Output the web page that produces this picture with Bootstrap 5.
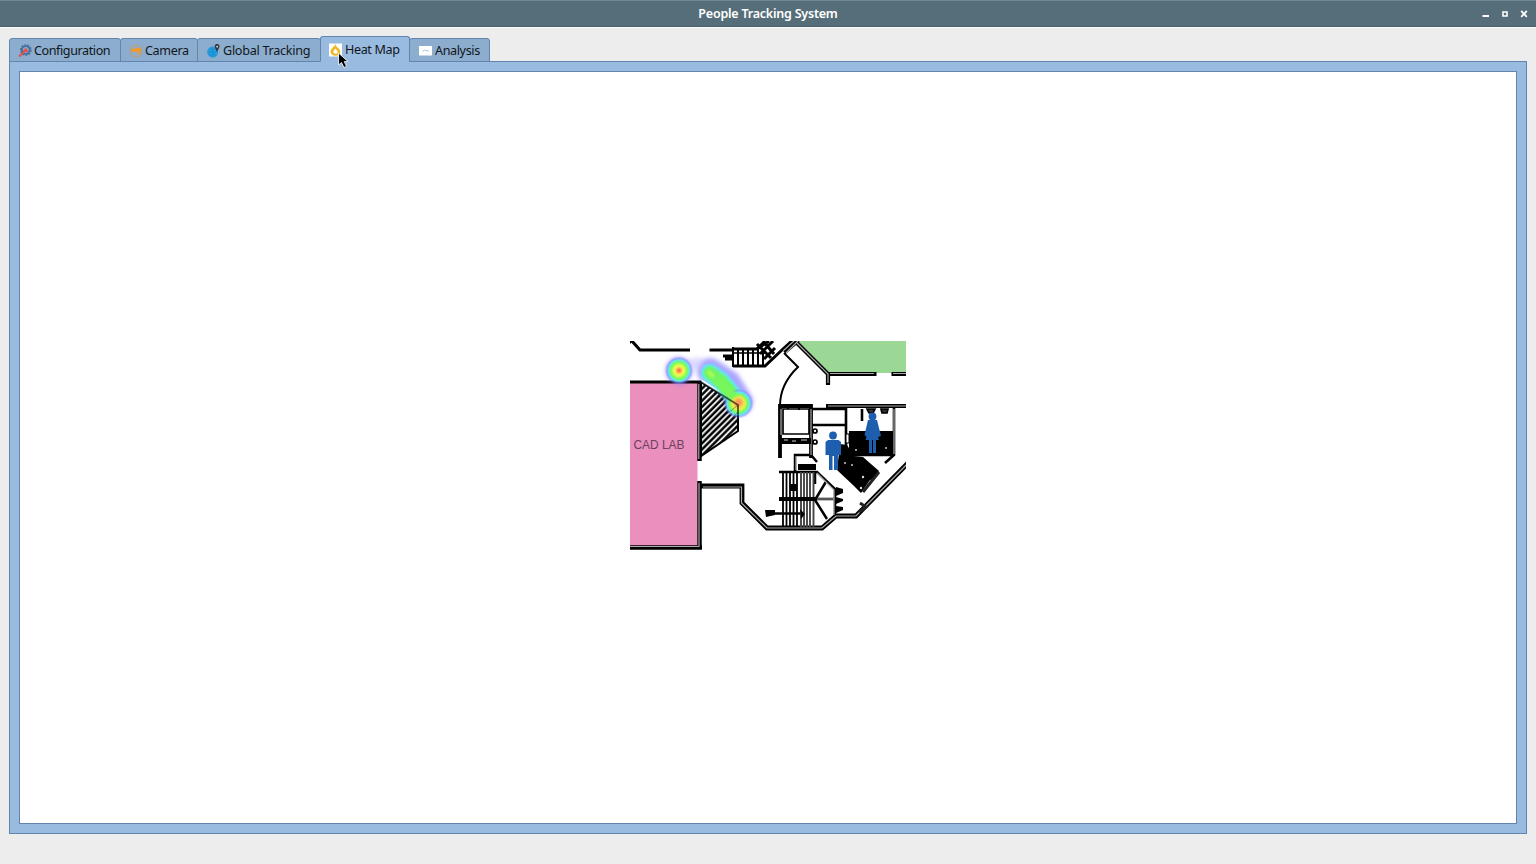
<!DOCTYPE html>
<html lang="en">
<head>
<meta charset="utf-8">
<meta name="viewport" content="width=device-width, initial-scale=1">
<title>People Tracking System</title>
<link href="https://cdn.jsdelivr.net/npm/bootstrap@5.3.0/dist/css/bootstrap.min.css" rel="stylesheet">
<style>
body{background:#ededed;font-family:"Noto Sans","Open Sans",sans-serif;color:#10161c;overflow:hidden}
.titlebar{height:28px;background:#566e79;border-top:1px solid #6f8791;border-bottom:1px solid #fafafa;box-shadow:inset 0 -1px #4b626d;color:#fff;display:grid;grid-template-columns:1fr auto 1fr}
.title-text{font-size:12.5px;font-weight:600;line-height:26px;letter-spacing:-.22px}
.app-tabs{height:34px;padding:8px 0 0 9px;border:0;align-items:flex-end;flex-wrap:nowrap;position:relative;z-index:1}
.app-tabs .nav-link{height:24px;margin:0 -1px 0 0;padding:1px 0 0 9px;border:1px solid #6285af;border-radius:3px 3px 0 0;background:#8dadce;color:#10161c;font-size:12.6px;letter-spacing:-.38px;line-height:22px;display:flex;align-items:center;gap:2px;white-space:nowrap}
.app-tabs .nav-link.active{height:26px;background:#9abbe0;color:#10161c;border-color:#6285af;border-bottom-color:#9abbe0;padding-top:2px;padding-left:8px}
.tab-config{width:112px}.tab-camera{width:78px}.tab-track{width:124px}.tab-heat{width:90px}.tab-analysis{width:81px}
.app-tabs .tab-config,.app-tabs .tab-camera{padding-left:8px}
.app-tabs .tab-config{letter-spacing:-.42px}
.app-tabs .tab-track{letter-spacing:-.28px}
.app-tabs svg{width:14px;height:14px;flex:none}
.pane{margin:-1px 9px 0;height:773px;background:#9abbe0;border:1px solid #6285af;padding:9px}
.canvas-area{background:#fff;border:1px solid #6285af}
.plan{margin-top:-4px;margin-left:-1px}
.plan filter{color-interpolation-filters:sRGB}
.pointer{position:absolute;left:337px;top:52px;z-index:3}
</style>
</head>
<body class="vh-100">
<header class="titlebar">
  <span></span><span class="title-text">People Tracking System</span>
  <svg class="ms-auto" width="60" height="26" viewBox="1476 1 60 26" fill="none" stroke="#fff" aria-hidden="true">
    <path d="M1482.500 16H1489" stroke-width="2"/><path d="M1503 12H1507V16H1503Z" stroke-width="1.600"/><path d="M1521.200 11L1526.800 16.800M1526.800 11L1521.200 16.800" stroke-width="1.800"/>
  </svg>
</header>
<nav class="nav nav-tabs app-tabs">
  <a class="nav-link tab-config" href="#"><svg viewBox="0 0 14 14"><circle cx="7.800" cy="6" r="3.900" fill="none" stroke="#456f9e" stroke-width="1.900"/><circle cx="7.800" cy="6" r="5.200" fill="none" stroke="#456f9e" stroke-width="1.300" stroke-dasharray="2 1.200"/><path d="M1 12.500L7 7M5.500 7.500L8.500 4.500M7 7l3 0" stroke="#e2514a" stroke-width="1.900"/></svg>Configuration</a>
  <a class="nav-link tab-camera" href="#"><svg viewBox="0 0 14 14"><circle cx="7" cy="7" r="5.800" fill="none" stroke="#c59b64" stroke-width="1"/><path d="M2 5L11 3.500L12 7L10.500 8V11L8 9.500V7.500L3 8Z" fill="#f09a27"/></svg>Camera</a>
  <a class="nav-link tab-track" href="#"><svg viewBox="0 0 14 14"><circle cx="5.700" cy="8" r="5.500" fill="#269de0"/><path d="M.5 8H11M5.700 2.500V13.500M2 4.500Q5.700 7 9.500 4.500M2 11.500Q5.700 9 9.500 11.500" fill="none" stroke="#1684bd" stroke-width=".6"/><path d="M10 8L8 3.500a2.400 2.400 0 1 1 4.200 0Z" fill="#30383e"/><circle cx="10.200" cy="2.700" r=".9" fill="#d8e4ee"/></svg>Global Tracking</a>
  <a class="nav-link tab-heat active" href="#"><svg viewBox="0 0 14 14"><path fill="#fff" d="M0 .5H13V13.500H0Z"/><path d="M6 1Q7.500 4 9.800 5.500Q13 10 9.500 12Q6.500 13.300 3.500 12Q0 9 2.500 6Q4 5 4 3.500L5.200 4Z" fill="#f3b51e"/><path d="M6.500 5.500Q10 9 8 10.500Q6.300 11.300 4.500 10Q3.500 8 6.500 5.500" fill="#fff"/></svg>Heat Map</a>
  <a class="nav-link tab-analysis" href="#"><svg viewBox="0 0 14 14"><path fill="#fff" d="M0 2H13V11.500H0Z"/><path d="M3.500 7.500L5.500 6L7 7L8 6L10 7.500" fill="none" stroke="#a8c6d8"/></svg>Analysis</a>
</nav>
<main class="pane">
  <div class="canvas-area h-100 d-flex align-items-center justify-content-center">
  <svg class="plan" width="276" height="210" viewBox="630 341 276 210" role="img" aria-label="Floor plan heat map">
    <defs>
      <pattern id="hatch" width="4.300" height="4.300" patternUnits="userSpaceOnUse" patternTransform="rotate(45)"><path d="M1.500 0V5" stroke="#000" stroke-width="2.500"/></pattern>
      <filter id="soft" filterUnits="userSpaceOnUse" x="640" y="341" width="140" height="100"><feGaussianBlur stdDeviation="2.200"/></filter>
      <filter id="fine" filterUnits="userSpaceOnUse" x="640" y="341" width="140" height="100"><feGaussianBlur stdDeviation="1"/></filter>
      <filter id="edge" filterUnits="userSpaceOnUse" x="625" y="336" width="286" height="220"><feGaussianBlur stdDeviation=".5"/></filter>
      <radialGradient id="hot"><stop stop-color="#ff5454"/><stop offset=".18" stop-color="#ffb651"/><stop offset=".32" stop-color="#efff4e"/><stop offset=".6" stop-color="#7afa5b"/><stop offset=".76" stop-color="#5beaf3"/><stop offset=".88" stop-color="#7a8aff" stop-opacity=".5"/><stop offset="1" stop-color="#8878ff" stop-opacity="0"/></radialGradient>
    </defs>
    <path d="M798 341H906V373H829Z" fill="#9bd896"/>
    <path d="M630 382H697.500V547H630Z" fill="#ea8fbe"/>
    <g filter="url(#edge)">
    <path d="M701 382L738 405V431L701 456Z" fill="url(#hatch)" stroke="#000" stroke-width="2"/>
    <g fill="none" stroke="#000" stroke-width="3">
      <path d="M629 341L631 343M631 340L640 350H690M709.500 350H734"/>
      <path d="M625 382H701"/><path d="M699.500 381V461M699.500 481V549M625 547.500H702" stroke-width="4.500"/>
      <path d="M701 486H742V503L767 528H822L836 516H856L910 461" stroke-width="4.800"/>
      <path d="M796 342L828 374V385M828 374H876.500M891.500 374H912" stroke-width="4.200"/>
      <path d="M780 458V406H811V458M826 406H912" stroke-width="3.800"/>
      <path d="M812 409H846V454M812 425H846M894 408V455L885 463M862 409V421M847 455H894" stroke-width="2.600"/>
      <path d="M795 471V455H811L817 462M779 472H817L835 489V515M815 472V484M780 499H834M815 500L827 480M815 500L827 519" stroke-width="2.500"/>
      <path d="M784 353L798 367Q780 384 780 406" stroke-width="2"/>
      <path d="M733 349H757L769 341M733 366H765L783 349L794 339"/>
      <path d="M733 347V367M738 350V366M743 350V366M748 350V366M753 350V366M758 347V366M763 351V366" stroke-width="2"/><path d="M733 353H765" stroke-width="1.500"/>
      <path d="M757 349l8-8M760 354l13-13M764 359l11-11M757 344l14 14M763 341l11 13M723 356H733M725 359H733"/>
      <path d="M784 352L798 340" stroke-width="5"/>
    </g>
    <g fill="none" stroke="#aaa" stroke-width="1.200">
      <path d="M698.800 384V459M699 483V546.500H625M703 487H741.500V503L767 528H822L836 516H856L910 461"/>
      <path d="M797 343L828 374V383M830 373.500H874M893 373.500H912M828 406H912M811 409V455M781 409V435M894 409V454M796 456V470M817 473L834 490V515M817 499H834"/>
      <path d="M783 351L795 340M786 353L798 341"/>
    </g>
    <path d="M783 409H809V434H783Z" fill="#fff" stroke="#000" stroke-width="1.700"/>
    <path d="M781 438H811V444H781Z" fill="#000"/><path d="M784 440H788M792 441H796M801 440H807" stroke="#ccc" stroke-width="1"/>
    <path d="M798 464H816V470H798Z" fill="#000"/><path d="M788 409V407M799 407V410" stroke="#000" stroke-width="2"/>
    <g stroke="#000" stroke-width="1.800"><path d="M783 472V527M786.500 472V527M790 472V527M793.500 472V527M797 472V527"/><path d="M801 472V527M804 472V527M807 472V527M810 472V527M813.500 472V527" stroke="#444" stroke-width="1.900"/><path d="M779 499H815" stroke-width="4"/><path d="M767 513.500H800" stroke-width="2.500"/></g>
    <path d="M765 510H775V515L766 517ZM800 509L805 514L801 519ZM790 484H797V491H790ZM836 487L843 489V493L836 496ZM836 497L843 499V501L836 504ZM836 506L843 507V510L836 513Z" fill="#000"/>
    <path d="M849 431H893V454H849ZM840 444L847 445L854 456L863 457L879 471L875 479L870 480L861 493L854 486L837 470Z" fill="#000"/>
    <path d="M863 492L879 472M860 503L866 507L859 512" fill="none" stroke="#222" stroke-width="3"/>
    <g fill="#fff" stroke="#000" stroke-width="1.700"><circle cx="815" cy="431" r="2"/><circle cx="815" cy="442" r="2"/><path d="M867 409H875L873 413H869ZM881 409H888L887 413H882Z" fill="#333"/></g>
    <path d="M846 434H849V443H846Z" fill="#fff" stroke="#000"/><g fill="#ddd"><circle cx="845" cy="463" r=".9"/><circle cx="852" cy="465" r=".9"/><circle cx="863" cy="477" r="1.200"/><circle cx="861" cy="488" r="1.200"/><circle cx="856" cy="450" r=".9"/><circle cx="886" cy="448" r=".9"/></g>
    </g>
    <g fill="#1d5eae"><circle cx="833" cy="435.500" r="3.900"/><path d="M828 440H838.500L841 442V455H838V470H834V456H832.500V470H829V455H825.500V442Z"/><circle cx="872.500" cy="416.500" r="3.900"/><path d="M868 420H877L881 436L878 437L879 440H876V453H873V440H872V453H869V440H865.500L866.500 437L864.500 435Z"/></g>
    <g filter="url(#soft)" opacity=".65"><path d="M710 371L728 383L740 402" fill="none" stroke="#8176ff" stroke-width="26" stroke-linecap="round"/><circle cx="679" cy="370.500" r="13.500" fill="#8176ff"/></g>
    <path d="M690 365Q695 362 702 364" fill="none" stroke="#c9c3ff" stroke-width="11" filter="url(#soft)" opacity=".6"/>
    <path d="M701 382L726 404L738 417V405Z" fill="url(#hatch)" opacity=".65"/>
    <path d="M702 381L726 396L735 403" fill="none" stroke="#fff" stroke-width="2.500" filter="url(#edge)"/>
    <g filter="url(#fine)" fill="none" stroke-linecap="round"><path d="M710 373L721 381L737 400" stroke="#58eff2" stroke-width="18"/><path d="M710 373L721 381L737 400" stroke="#70f565" stroke-width="13"/></g>
    <circle cx="679" cy="370.500" r="14" fill="url(#hot)"/><circle cx="738.500" cy="403.500" r="15" fill="url(#hot)"/><path d="M717 379L735 399" stroke="#78f65a" stroke-width="10" filter="url(#fine)"/><circle cx="738.500" cy="403" r="7" fill="#f0e550" filter="url(#fine)"/><circle cx="738.500" cy="402.500" r="4" fill="#ff9b58" filter="url(#fine)"/><ellipse cx="711" cy="374" rx="5" ry="2" transform="rotate(42 711 374)" fill="#b2f94f" filter="url(#fine)"/>
    <path d="M701 382L738 405V417" fill="none" stroke="#000" stroke-width="1.900" opacity=".6" filter="url(#edge)"/><path d="M727 414L738 405M732 418L738 412" stroke="#333" opacity=".45"/>
    <text x="633.500" y="449" font-family="Liberation Sans, sans-serif" font-size="13" textLength="51" lengthAdjust="spacingAndGlyphs" fill="#6e405b">CAD LAB</text>
  </svg>
  </div>
</main>
<svg class="pointer" width="13" height="17" viewBox="0 0 13 17" aria-hidden="true"><path d="M1.500 1V13L4.500 10.500L7 15.500L9.500 14.300L7.200 9.600H11Z" fill="#000" stroke="#fff" stroke-width=".8"/></svg>
<script src="https://cdn.jsdelivr.net/npm/bootstrap@5.3.0/dist/js/bootstrap.bundle.min.js"></script>
</body>
</html>
